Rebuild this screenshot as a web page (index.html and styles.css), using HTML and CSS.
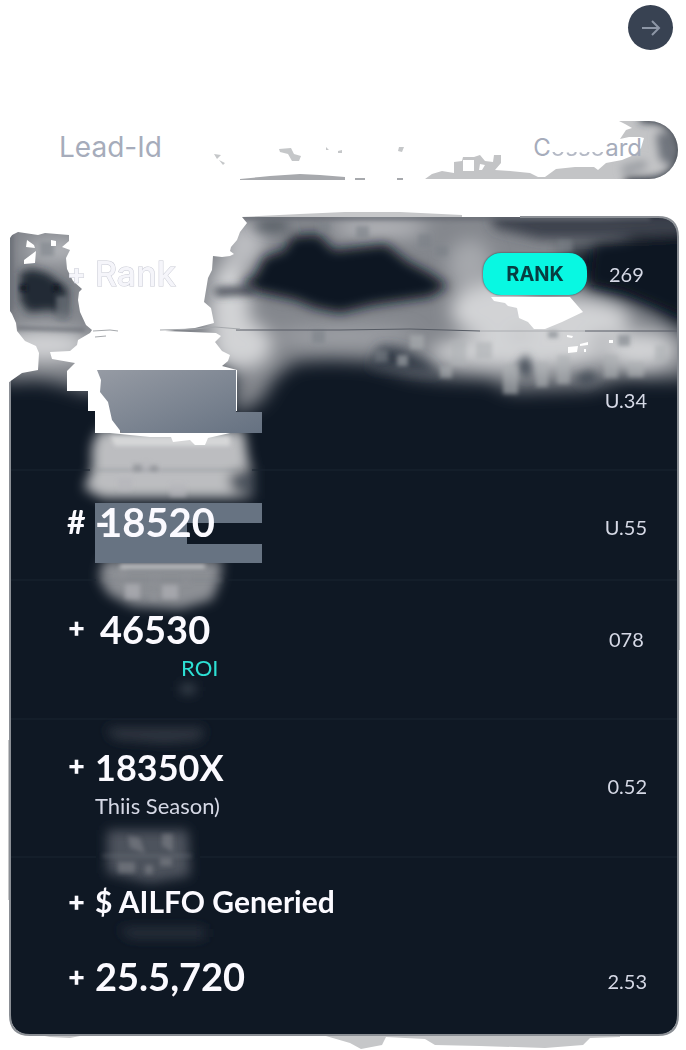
FILE: index.html
```html
<!DOCTYPE html>
<html lang="en">
<head>
<meta charset="utf-8">
<meta name="viewport" content="width=device-width, initial-scale=1">
<title>Lead rank</title>
<link rel="stylesheet" href="styles.css">
</head>
<body>
<main class="page">
  <header class="topbar">
    <button class="next" type="button" aria-label="Next">
      <svg viewBox="0 0 24 24" aria-hidden="true"><path d="M3 12H20M13 5L20 12L13 19"/></svg>
    </button>
  </header>

  <div class="columns">
    <svg class="art" viewBox="10 121 668 58" preserveAspectRatio="none" aria-hidden="true">
      <defs>
        <filter id="soft4" x="-20%" y="-50%" width="140%" height="200%"><feGaussianBlur stdDeviation="4"/></filter>
        <clipPath id="capsule"><path d="M619 121H649A29 29 0 0 1 649 179H425L432 174L442 171L454 173V162L462 161L463 157H474L480 155L485 161L493 162L494 155L501 155V163L495 170L510 171L530 173L538 177L545 177L556 169L575 167L594 167L598 170L606 163L622 160L634 155L641 148L644 138L640 137H629L620 139L626 130L632 128L625 124Z"/></clipPath>
      </defs>
      <g clip-path="url(#capsule)">
        <rect x="340" y="121" width="340" height="60" fill="#c3c4c6"/>
        <g filter="url(#soft4)">
          <path d="M640 117H650A32 32 0 0 1 650 183H625" fill="none" stroke="#2a323e" stroke-width="11"/>
          <path d="M656 134L676 130V168L660 160Z" fill="#70757d"/>
          <path d="M622 170L646 164" stroke="#92959b" stroke-width="7"/>
        </g>
      </g>
      <path fill="#fff" d="M463 160H474V171H463ZM480 164L485 165L482 170H479Z"/>
      <path fill="#c5c7c9" d="M214 154L221 155L217 159ZM219 160L225 163L223 165ZM279 149L291 148L294 154L301 156L299 161L292 161L288 154L280 152ZM326 147L329 150H326ZM338 151L342 150V153H338ZM399 147L404 147L402 152L398 151Z"/>
      <path fill="#a7a9ad" d="M240 179L260 177L270 176L300 174L320 175L345 177V180H240ZM355 178H365V180H355ZM397 178H403V180H397Z"/>
    </svg>
    <span class="column-name">Lead-Id</span>
    <span class="column-value">C<span class="faded">osso</span>ard</span>
  </div>

  <section class="card">
    <svg class="art" viewBox="10 217 668 818" preserveAspectRatio="none" aria-hidden="true">
      <defs>
        <filter id="b2" x="-20%" y="-20%" width="140%" height="140%"><feGaussianBlur stdDeviation="2"/></filter>
        <filter id="b4" x="-30%" y="-30%" width="160%" height="160%"><feGaussianBlur stdDeviation="4"/></filter>
        <filter id="b6" x="-30%" y="-30%" width="160%" height="160%"><feGaussianBlur stdDeviation="6"/></filter>
        <filter id="b9" x="-30%" y="-30%" width="160%" height="160%"><feGaussianBlur stdDeviation="9"/></filter>
        <clipPath id="panel"><rect x="10" y="217" width="668" height="818" rx="20"/></clipPath>
        <linearGradient id="slate" x1="0" y1="0" x2="1" y2="1"><stop offset="0" stop-color="#969ba4"/><stop offset="1" stop-color="#657181"/></linearGradient>
      </defs>
      <path fill="#c6c7c9" d="M241 217L300 214L345 212L400 212L462 215V220H241ZM319 1034L350 1043L361 1049L382 1045L386 1037L425 1039L435 1045L480 1046L545 1048L583 1045L590 1038L620 1037V1033ZM14 1030L50 1037L70 1038L80 1036V1030ZM8 740H12V900H8ZM676 570H680V650H676Z"/>
      <g clip-path="url(#panel)">
        <rect x="10" y="217" width="668" height="818" fill="#0f1824"/>
        <path filter="url(#b9)" fill="#84878d" d="M0 205H520L600 208L640 240L560 250L590 290L650 308L690 335V378L655 379L625 378L590 388L535 390L510 391L490 380L440 378L410 374L370 362L330 360L295 362L275 378L262 400L242 412H234V365H100V392H85L65 385L40 380L0 382Z"/>
        <g filter="url(#b9)" fill="#d2d3d5">
          <ellipse cx="495" cy="310" rx="44" ry="28"/><ellipse cx="570" cy="320" rx="60" ry="22"/>
          <ellipse cx="520" cy="352" rx="90" ry="16"/><ellipse cx="230" cy="310" rx="20" ry="50"/>
          <ellipse cx="242" cy="345" rx="30" ry="24"/><ellipse cx="640" cy="350" rx="36" ry="18"/><ellipse cx="45" cy="345" rx="45" ry="16"/>
          <ellipse cx="470" cy="265" rx="22" ry="26" fill="#a5a7ac"/><ellipse cx="380" cy="228" rx="48" ry="9" fill="#bbbcc0"/><ellipse cx="55" cy="250" rx="30" ry="12" fill="#b5b7bb"/>
          <ellipse cx="345" cy="336" rx="70" ry="8" fill="#a3a5aa"/><ellipse cx="245" cy="245" rx="20" ry="22" fill="#bcbdc1"/>
        </g>
        <g filter="url(#b6)" fill="#0b1521">
          <path d="M240 284L255 276L264 257L284 250L292 236L318 234L334 250L386 244L407 261L430 273L448 286L430 297L373 305L340 313L315 308L295 300L258 292Z"/>
          <path d="M594 246L628 242L698 222V322L660 306L625 291L590 284Z"/>
          <path d="M490 214H690V234L600 239L540 239L495 228Z" fill="#3c434e"/>
          <path d="M380 346L400 348L425 360L440 375L370 368Z" fill="#353d49"/>
          <ellipse cx="272" cy="226" rx="18" ry="6" fill="#555b64"/>
        </g>
        <g filter="url(#b4)" fill="#202934">
          <path d="M20 273L32 269L47 273L68 288L66 318L52 310L28 312L20 300Z"/>
          <path d="M214 288L255 286V294L216 296Z" fill="#3a414c"/>
          <path d="M516 366L526 354L533 366L528 382ZM573 377L590 370L600 379L585 388Z" fill="#4c535d"/>
        </g>
        <g filter="url(#b2)">
          <path opacity=".6" fill="#aeb0b4" d="M410 335H424V349H410ZM397 355H408V366H397ZM451 341H466V365H451ZM503 365H518V394H503ZM536 362H548V387H536ZM557 355H570V384H557ZM604 355H618V378H604ZM476 342H492V359H476ZM440 366H452V378H440ZM628 362H644V377H628ZM655 345H666V362H655Z"/>
          <path opacity=".6" fill="#7c8087" d="M40 242H54V256H40ZM56 296H67V320H56ZM356 226H369V238H356ZM312 330H325V343H312ZM548 331H558V338H548ZM618 335H630V346H618ZM418 234H431V247H418ZM436 246H448V256H436ZM375 350H388V362H375ZM318 222H330V232H318ZM558 240H572V252H558Z"/>
          <path fill="#0b1521" d="M20 285H27V291H20ZM53 285H59V291H53Z"/>
          <path fill="none" stroke="#666a72" stroke-width="3" d="M11 234V310M242 218H650M16 328L85 330"/>
        </g>
        <path fill="none" stroke="#565b64" d="M236 330H340L410 329L480 331M585 331H678"/>
        <path fill="none" stroke="#aaacb0" d="M480 331H585"/>
        <g filter="url(#b6)">
          <path fill="#bcbdc0" d="M99 430H244L249 465L250 498H102L84 488L92 470L92 446Z"/>
          <path fill="#505761" d="M228 476L254 464V500L232 491Z"/>
          <path fill="#8c8f94" d="M103 560H222L220 580L212 600L180 609L132 606L108 594L99 578Z"/>
          <path fill="#303843" d="M106 728H205L200 740L165 743L114 739Z"/>
          <path fill="#4d535d" d="M107 830H188L190 876L150 883L107 873Z"/>
          <path fill="#2a323e" d="M118 928H205V938H130Z"/>
          <path fill="#4a515b" d="M181 685H195V693H181Z"/>
        </g>
        <g filter="url(#b2)">
          <path fill="#d6d7d8" d="M110 436H230V446H115ZM120 565H205V568H120Z"/>
          <path opacity=".7" fill="#8e9197" d="M133 464H142V472H133ZM150 465H158V472H150ZM118 570H127V580H118ZM150 575H160V585H150ZM150 592H158V600H150ZM182 575H190V584H182Z"/>
          <path opacity=".6" fill="#b5b6ba" d="M125 584H140V599H125ZM162 585H178V599H162ZM142 462H150V472H142ZM118 478H132V490H118ZM170 484H186V497H170Z"/>
          <path opacity=".7" fill="#777b82" d="M128 836L140 838L145 853L130 848ZM162 834H173V852L162 846ZM118 862H135V873H118ZM160 858H172V866H160ZM145 865H153V874H145Z"/>
          <path fill="none" stroke="#7b7f85" d="M95 470H240M102 580H222M102 856H192"/>
        </g>
        <path fill="#fff" d="M67 371H98V433H95V411H88V391H67Z"/>
        <path fill="#fff" d="M242 217L247 223L240 232L237 240L231 247L230 251L234 254L230 256L222 257L213 256L212 270L208 278L204 302L211 308L214 323L195 328L165 331L216 333L221 336L215 342L222 351L230 355L228 361L222 366L237 370V411H120V433H95V411H88V391H67V371L75 363L52 359L50 352L70 351L77 345L78 340L90 333L92 330L86 325L80 312L78 300L79 292L82 289L73 281L67 269L66 258L70 250L62 247L69 241V235L45 233L38 235L18 232L10 236V217Z"/>
        <path fill="#fff" d="M27 240L34 245L35 248L26 247ZM51 240L56 241V246H51ZM24 260L36 251L35 263L24 264ZM491 297H570L583 312L562 322L545 329H534L528 322L519 318L517 308L508 306L505 303L494 301ZM567 335L573 336L572 338L567 337ZM568 347L578 346L577 352L568 353ZM580 344L588 342L588 345L580 346ZM584 349H586V352H584ZM609 340H613V343H609Z"/>
        <path fill="#fff" d="M110 433H230L208 438L205 445H195L190 440L173 442L171 437L150 437Z"/>
        <path fill="none" stroke="#a5a8ac" d="M93 331L110 330L118 331M160 330L195 329L215 327L240 329M95 337L106 336"/>
        <path fill="url(#slate)" d="M97 370H236V412H262V433H122L112 420L108 402L100 392L101 380Z"/>
        <path fill="#677382" d="M95 503H262V523H187V544H262V563H95Z"/>
        <path fill="none" stroke="#1a2430" d="M10 470H90M252 470H678M10 580H96M228 580H678M10 719H678M10 857H96M200 857H678"/>
      </g>
      <path fill="none" stroke="#8b8f95" stroke-width="2" d="M10 380V1015Q10 1035 30 1035H658Q678 1035 678 1015V237Q678 217 658 217H520"/>
      <path fill="#fff" d="M8 214H240V219L30 219L14 232L10 238L8 238ZM8 308L12 314L16 323L17 331L25 341L36 346L39 353L38 370L22 373L12 380L8 383Z"/>
    </svg>

    <ul class="rows">
      <li class="row row-rank">
        <span class="mark ghost">+</span>
        <span class="title ghost">Rank</span>
        <span class="end"><button class="pill" type="button">RANK</button><span class="value">269</span></span>
      </li>
      <li class="row row-tall">
        <span class="mark"></span><span></span>
        <span class="value">U.34</span>
      </li>
      <li class="row row-short">
        <span class="mark hash">#</span>
        <span class="number large"><span class="dash">-</span>18520</span>
        <span class="value low">U.55</span>
      </li>
      <li class="row row-tall">
        <span class="mark lead">+</span>
        <span class="stack"><span class="number medium">46530</span><span class="note accent">ROI</span></span>
        <span class="value lead-value">078</span>
      </li>
      <li class="row row-tall">
        <span class="mark lead">+</span>
        <span class="stack"><span class="number">18350X</span><span class="note">Thiis Season)</span></span>
        <span class="value">0.52</span>
      </li>
      <li class="row row-slim">
        <span class="mark">+</span>
        <span class="label">$ AILFO Generied</span>
      </li>
      <li class="row row-last">
        <span class="mark">+</span>
        <span class="number total">25.5,720</span>
        <span class="value low">2.53</span>
      </li>
    </ul>
  </section>
</main>
</body>
</html>
```

FILE: styles.css
```css
* { box-sizing: border-box; }
body { margin: 0; background: #fff; font-family: Lato, "Open Sans", sans-serif; color: #fbfaff; }
.page { padding: 5px 8px 15px 10px; overflow: hidden; }
.topbar { display: flex; justify-content: flex-end; padding-right: 5px; }
.next { width: 45px; height: 45px; padding: 0; border: 0; border-radius: 50%; background: #384252; display: grid; place-items: center; }
.next svg { width: 24px; height: 24px; fill: none; stroke: #8d96a6; stroke-width: 2; }
.columns { position: relative; display: flex; align-items: center; justify-content: space-between; height: 58px; margin: 71px 0 38px; padding: 0 36px 6px 49px; font-family: Inter, sans-serif; color: #a6acbb; }
.column-name { position: relative; font-size: 28px; }
.column-value { position: relative; font-size: 24px; }
.faded { color: transparent; background: linear-gradient(#fff 66%, #b4b9c5 66%); -webkit-background-clip: text; background-clip: text; }
.art { position: absolute; inset: 0; width: 100%; height: 100%; overflow: visible; }
.card { position: relative; }
.rows { position: relative; margin: 0; padding: 0; list-style: none; }
.row { display: grid; grid-template-columns: 28px 1fr auto; align-items: center; padding: 0 31px 0 57px; }
.row-rank { min-height: 114px; }
.row-tall { min-height: 138px; }
.row-short { min-height: 110px; padding-bottom: 4px; }
.row-slim { min-height: 92px; }
.row-last { min-height: 88px; padding-bottom: 30px; }
.mark { font: 700 28px/40px Inter, sans-serif; }
.hash { font: 700 32px/40px Lato, sans-serif; }
.lead { align-self: start; margin-top: 28px; }
.lead-value { align-self: start; margin-top: 48px; }
.title { font: 500 34px/40px Inter, sans-serif; }
.ghost { color: #f5f5fa; -webkit-text-stroke: 1px #c9cbd5; paint-order: stroke fill; }
.end { display: flex; align-items: center; gap: 22px; }
.pill { height: 42px; padding: 0 23px; border: 0; border-radius: 18px; background: #08f8e2; color: #073e42; font: 700 20px/24px Inter, sans-serif; box-shadow: 0 0 2px #2a323e; }
.value { min-width: 38px; font-size: 20px; line-height: 24px; color: #d5d8e5; }
.low { padding-top: 10px; }
.stack { display: grid; justify-items: start; }
.number { font-size: 36px; line-height: 40px; font-weight: 700; white-space: nowrap; }
.medium { font-size: 38px; padding-left: 5px; }
.large { font-size: 40px; }
.dash { display: inline-block; width: 4px; }
.total { font-size: 38px; }
.note { font-size: 22px; line-height: 38px; color: #d5d8e5; }
.accent { padding-left: 86px; color: #2de0d4; }
.label { font-size: 30px; line-height: 40px; font-weight: 700; white-space: nowrap; }
```
